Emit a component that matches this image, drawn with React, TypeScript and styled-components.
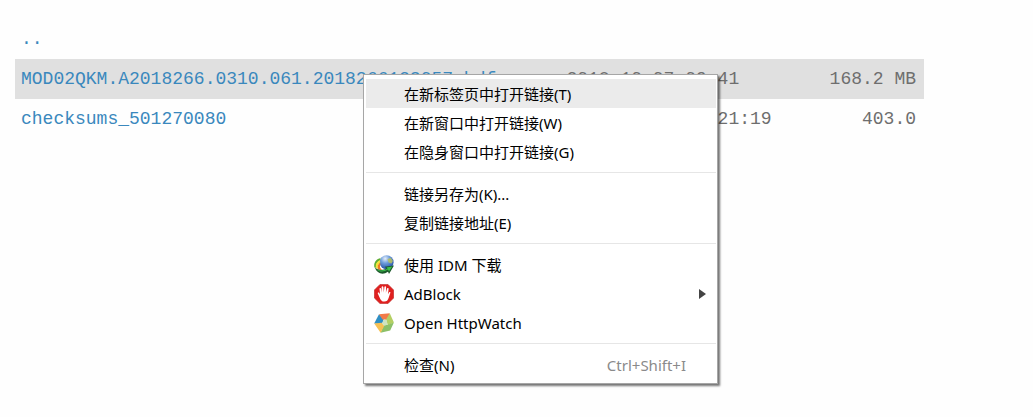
import React from "react";
import styled, { createGlobalStyle } from "styled-components";

const GlobalStyle = createGlobalStyle`
  * { box-sizing: border-box; }
  body { margin: 0; background: #fefefe; }
`;

const Page = styled.main`
  position: relative;
  min-height: 100vh;
  padding: 19px 109px 32px 15px;
`;

const Listing = styled.table`
  width: 100%;
  table-layout: fixed;
  border-collapse: collapse;
  font-family: "Liberation Mono", monospace;
  font-size: 18px;
  line-height: 24px;
  color: #6e6e6e;
`;

const Row = styled.tr<{ $hovered?: boolean }>`
  height: 40px;
  background: ${(p) => (p.$hovered ? "#e0e0e0" : "transparent")};
`;

const Cell = styled.td<{ $width?: string; $end?: boolean }>`
  width: ${(p) => p.$width ?? "auto"};
  padding: 0 8px 0 6px;
  text-align: ${(p) => (p.$end ? "right" : "left")};
  white-space: nowrap;
`;

const FileLink = styled.a`
  color: #3a88bd;
  text-decoration: none;
`;

const Menu = styled.div`
  position: absolute;
  top: 74px;
  left: 363px;
  width: 355px;
  padding: 4px 1px 4px 2px;
  background: #fff;
  border: 1px solid #a6a6a6;
  box-shadow: 2px 2px 2px rgba(0, 0, 0, 0.55);
`;

const MenuItem = styled.button<{ $active?: boolean }>`
  display: flex;
  align-items: center;
  width: 100%;
  height: 29px;
  padding: 0 10px 0 8px;
  border: 0;
  background: ${(p) => (p.$active ? "#ebebeb" : "transparent")};
  color: #000;
  font-family: "Noto Sans", "Noto Sans CJK SC", sans-serif;
  font-size: 15px;
  line-height: 24px;
  text-align: left;
  white-space: nowrap;
`;

const IconSlot = styled.span`
  display: flex;
  flex: none;
  width: 30px;
`;

const Label = styled.span`
  flex: 1;
`;

const Shortcut = styled.span`
  padding-right: 20px;
  color: #8a8a8a;
`;

const Separator = styled.hr`
  height: 1px;
  margin: 6px 0;
  border: 0;
  background: #e6e6e6;
`;

const IdmIcon = () => (
  <svg width="20" height="20" viewBox="0 0 20 20" aria-hidden="true">
    <defs>
      <radialGradient id="globe" cx="0.4" cy="0.25" r="0.8">
        <stop offset="0" stopColor="#e6effa" />
        <stop offset="0.4" stopColor="#6f9ddb" />
        <stop offset="1" stopColor="#1b48a0" />
      </radialGradient>
    </defs>
    <circle cx="12.6" cy="7.2" r="7" fill="url(#globe)" />
    <path d="M13.5 4.2 L16.6 2.8 L18.9 6 L17.4 8.4 L14.6 7.4Z" fill="#b9c25a" opacity=".85" />
    <path d="M6.6 3 C2 4 -.6 8 .4 12.4 L2 12.8 C1.8 9 3.4 6.8 6 5.6Z" fill="#5fae35" />
    <path d="M6 5.2 C2.6 6.6 1.2 9.4 2 13 L3.8 14 C3.4 10.8 4.4 9 6.2 7.8Z" fill="#f4e33a" />
    <path d="M6 7.6 C3.8 9.2 3.2 12 4 14.4 L8.6 15.2 C6 13.6 5.4 11.4 6.4 9.4Z" fill="#ee7a24" />
    <path d="M.8 12.6 C3 19 9 20.4 14 16.8 L15 19 L20 10.6 L10.6 11.8 L12.6 13.6 C9 15.6 4 15.4 .8 12.6Z" fill="#1d5a2c" />
    <path d="M2.4 14.2 C5 17.2 10 17.2 13.9 14.6 L15 16.4 L18.2 11.6 L12.4 12.4 L13.6 13.4 C10 15.8 5.4 16 2.4 14.2Z" fill="#3cc24c" />
  </svg>
);

const AdBlockIcon = () => (
  <svg width="20" height="20" viewBox="0 0 20 20" aria-hidden="true">
    <path d="M6 .4 H14 L19.6 6 V14 L14 19.6 H6 L.4 14 V6Z" fill="#e0201f" stroke="#b8201e" strokeWidth=".6" />
    <path
      d="M5.6 13.4 L3.8 9.6 C3.4 8.4 4.8 8 5.3 8.9 L6.1 10.4 L5.5 5 C5.4 3.8 6.9 3.5 7.1 4.7 L7.8 8.8 L7.6 3.3 C7.6 2 9.2 2 9.4 3.2 L9.8 8.6 L10.4 3 C10.5 1.8 12.1 1.9 12.1 3.1 L11.9 8.8 L13 4.6 C13.3 3.4 14.8 3.8 14.6 5 L14 10.2 L15 8.4 C15.6 7.4 16.8 8 16.3 9.1 L14.6 14 C13.8 16.4 12.8 17.6 10.4 17.6 C7.8 17.6 6.6 16 5.6 13.4Z"
      fill="#fff"
    />
  </svg>
);

const HttpWatchIcon = () => (
  <svg width="20" height="20" viewBox="0 0 20 20" aria-hidden="true">
    <path d="M5 1.2 L.2 10.6 L8 11.2 L9.8 6Z" fill="#2f8fc4" />
    <path d="M5 1.2 L15.8 .2 L13.4 7 L8.6 6.6Z" fill="#f27a48" />
    <path d="M15.8 .2 L19.9 9.6 L13.8 12.6 L12 6.6Z" fill="#b4cf63" />
    <path d="M19.9 9.6 L16.2 17.6 L6.6 19.8 L9.4 12.6 L14 11.8Z" fill="#8cc068" />
    <path d="M.2 10.6 L7.6 9.8 L10.2 13 L6.6 19.8Z" fill="#f7c154" />
    <path d="M9.8 6.4 L12.6 6.8 L13.6 11.8 L9.8 12.6 L8 10.2Z" fill="#cfe3c0" />
  </svg>
);

const SubmenuArrow = () => (
  <svg width="7" height="10" viewBox="0 0 7 10" aria-hidden="true">
    <path d="M0 0 L7 5 L0 10Z" fill="#444" />
  </svg>
);

interface ItemProps {
  label: string;
  icon?: React.ReactNode;
  shortcut?: string;
  submenu?: boolean;
  active?: boolean;
}

const Item = ({ label, icon, shortcut, submenu, active }: ItemProps) => (
  <MenuItem type="button" role="menuitem" $active={active} aria-haspopup={submenu ? "menu" : undefined}>
    <IconSlot>{icon}</IconSlot>
    <Label>{label}</Label>
    {shortcut && <Shortcut>{shortcut}</Shortcut>}
    {submenu && <SubmenuArrow />}
  </MenuItem>
);

const files = [
  { name: "..", date: "", size: "" },
  { name: "MOD02QKM.A2018266.0310.061.2018266123057.hdf", date: "2018-10-07 09:41", size: "168.2 MB", hovered: true },
  { name: "checksums_501270080", date: "2018-10-07 09:21:19", size: "403.0" },
];

export default function App() {
  return (
    <Page>
      <GlobalStyle />
      <Listing>
        <tbody>
          {files.map((f) => (
            <Row key={f.name} $hovered={f.hovered}>
              <Cell $width="60%">
                <FileLink href="#">{f.name}</FileLink>
              </Cell>
              <Cell $width="25%">{f.date}</Cell>
              <Cell $end>{f.size}</Cell>
            </Row>
          ))}
        </tbody>
      </Listing>
      <Menu role="menu">
        <Item label="在新标签页中打开链接(T)" active />
        <Item label="在新窗口中打开链接(W)" />
        <Item label="在隐身窗口中打开链接(G)" />
        <Separator />
        <Item label="链接另存为(K)..." />
        <Item label="复制链接地址(E)" />
        <Separator />
        <Item label="使用 IDM 下载" icon={<IdmIcon />} />
        <Item label="AdBlock" icon={<AdBlockIcon />} submenu />
        <Item label="Open HttpWatch" icon={<HttpWatchIcon />} />
        <Separator />
        <Item label="检查(N)" shortcut="Ctrl+Shift+I" />
      </Menu>
    </Page>
  );
}
